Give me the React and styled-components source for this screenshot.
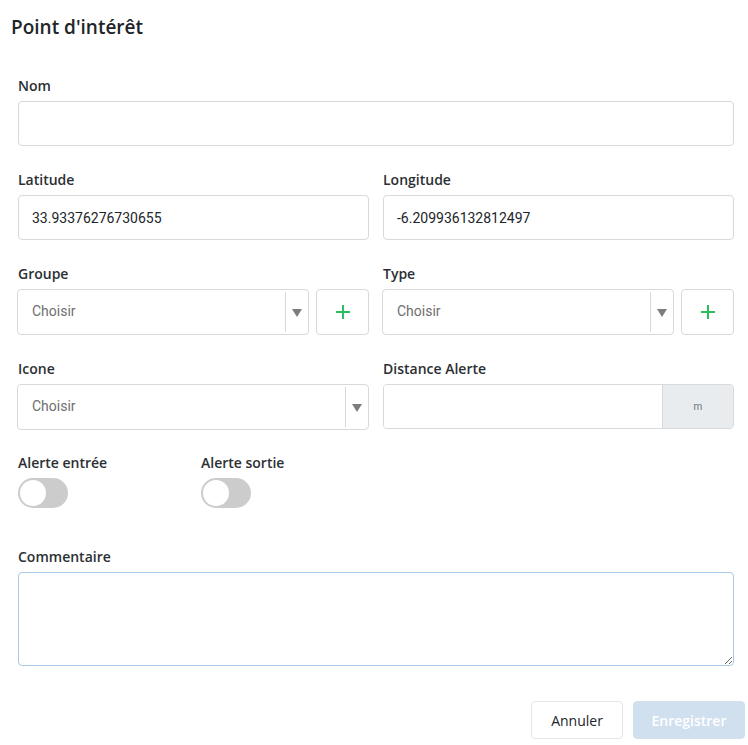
import React from 'react';
import styled, { createGlobalStyle } from 'styled-components';

const GlobalStyle = createGlobalStyle`
  body {
    margin: 0;
    background: #ffffff;
    font-family: 'Open Sans', 'Liberation Sans', sans-serif;
    color: #212529;
  }
`;

const Page = styled.div`
  width: 748px;
  box-sizing: border-box;
`;

const Title = styled.h1`
  margin: 0;
  padding: 15px 11px 0;
  font-size: 19px;
  line-height: 24px;
  font-weight: 600;
  color: #212529;
`;

const Form = styled.form`
  padding: 37px 14px 0 18px;
`;

const Field = styled.div`
  margin-bottom: ${(p) => p.$gap ?? 24}px;
`;

const Label = styled.label`
  display: block;
  font-size: 14px;
  line-height: 20px;
  font-weight: 600;
  margin-bottom: 5px;
  color: #2b2f33;
`;

const Input = styled.input`
  display: block;
  width: 100%;
  height: 45px;
  box-sizing: border-box;
  padding: 0 13px;
  border: 1px solid #d9d9d9;
  border-radius: 4px;
  font-family: Roboto, 'Liberation Sans', sans-serif;
  font-size: 14px;
  color: #212529;
  outline: none;
`;

const Columns = styled.div`
  display: grid;
  grid-template-columns: 1fr 1fr;
  column-gap: 14px;
`;

const SelectRow = styled.div`
  display: flex;
  gap: 7px;
  margin-left: -1px;
`;

const Select = styled.div`
  flex: 1;
  display: flex;
  align-items: center;
  height: 46px;
  box-sizing: border-box;
  border: 1px solid #d9d9d9;
  border-radius: 4px;
  font-family: Roboto, 'Liberation Sans', sans-serif;
  font-size: 14px;
  color: #6f6f6f;
`;

const SelectValue = styled.span`
  flex: 1;
  padding-left: 14px;
  margin-top: -2px;
`;

const Caret = styled.span`
  align-self: stretch;
  display: flex;
  align-items: center;
  justify-content: center;
  width: 22px;
  margin: 2px 0;
  border-left: 1px solid #d9d9d9;

  &::after {
    content: '';
    margin-top: 2px;
    border-left: 5px solid transparent;
    border-right: 5px solid transparent;
    border-top: 8px solid #7d7d7d;
  }
`;

const AddButton = styled.button`
  width: 53px;
  height: 46px;
  display: flex;
  align-items: center;
  justify-content: center;
  padding: 0;
  background: #ffffff;
  border: 1px solid #d9d9d9;
  border-radius: 4px;
`;

const InputGroup = styled.div`
  display: flex;
  height: 45px;
  box-sizing: border-box;
  border: 1px solid #d9d9d9;
  border-radius: 4px;
  overflow: hidden;
`;

const GroupInput = styled.input`
  flex: 1;
  min-width: 0;
  border: none;
  padding: 0 13px;
  outline: none;
  font-family: Roboto, 'Liberation Sans', sans-serif;
  font-size: 14px;
`;

const Addon = styled.span`
  width: 70px;
  display: flex;
  align-items: center;
  justify-content: center;
  background: #e9ecef;
  border-left: 1px solid #d9d9d9;
  font-family: Roboto, 'Liberation Sans', sans-serif;
  font-size: 10px;
  color: #6c757d;
`;

const Toggles = styled.div`
  display: grid;
  grid-template-columns: 183px 183px;
`;

const Switch = styled.span`
  display: block;
  position: relative;
  width: 50px;
  height: 30px;
  border-radius: 15px;
  background: #cccccc;

  &::before {
    content: '';
    position: absolute;
    left: 2px;
    top: 2px;
    width: 26px;
    height: 26px;
    border-radius: 50%;
    background: #ffffff;
  }
`;

const TextArea = styled.textarea`
  display: block;
  width: 100%;
  height: 94px;
  box-sizing: border-box;
  border: 1px solid #a9c9eb;
  border-radius: 4px;
  padding: 8px 13px;
  font-family: Roboto, 'Liberation Sans', sans-serif;
  font-size: 14px;
  outline: none;
`;

const Footer = styled.div`
  display: flex;
  justify-content: flex-end;
  gap: 10px;
  padding: 35px 3px 0 0;
`;

const Button = styled.button`
  width: ${(p) => (p.$primary ? 112 : 92)}px;
  height: 38px;
  padding: 0;
  border-radius: 4px;
  font-family: 'Open Sans', 'Liberation Sans', sans-serif;
  font-size: 14px;
  font-weight: ${(p) => (p.$primary ? 600 : 500)};
  color: ${(p) => (p.$primary ? '#ffffff' : '#212529')};
  background: ${(p) => (p.$primary ? '#d0e0ef' : '#ffffff')};
  border: 1px solid ${(p) => (p.$primary ? '#d0e0ef' : '#e6e6e6')};
`;

const Plus = () => (
  <svg width="16" height="16" viewBox="0 0 16 16">
    <path d="M8 1v14M1 8h14" stroke="#2ebd5c" strokeWidth="2" fill="none" />
  </svg>
);

const Chooser = ({ add }) => (
  <SelectRow>
    <Select>
      <SelectValue>Choisir</SelectValue>
      <Caret />
    </Select>
    {add && (
      <AddButton type="button">
        <Plus />
      </AddButton>
    )}
  </SelectRow>
);

export default function App() {
  return (
    <Page>
      <GlobalStyle />
      <Title>Point d'intérêt</Title>
      <Form>
        <Field>
          <Label>Nom</Label>
          <Input />
        </Field>
        <Columns>
          <Field>
            <Label>Latitude</Label>
            <Input defaultValue="33.93376276730655" />
          </Field>
          <Field>
            <Label>Longitude</Label>
            <Input defaultValue="-6.209936132812497" />
          </Field>
          <Field>
            <Label>Groupe</Label>
            <Chooser add />
          </Field>
          <Field>
            <Label>Type</Label>
            <Chooser add />
          </Field>
          <Field $gap={23}>
            <Label>Icone</Label>
            <Chooser />
          </Field>
          <Field $gap={23}>
            <Label>Distance Alerte</Label>
            <InputGroup>
              <GroupInput />
              <Addon>m</Addon>
            </InputGroup>
          </Field>
        </Columns>
        <Field $gap={39}>
          <Toggles>
            <div>
              <Label>Alerte entrée</Label>
              <Switch />
            </div>
            <div>
              <Label>Alerte sortie</Label>
              <Switch />
            </div>
          </Toggles>
        </Field>
        <Field $gap={0}>
          <Label>Commentaire</Label>
          <TextArea />
        </Field>
      </Form>
      <Footer>
        <Button type="button">Annuler</Button>
        <Button type="button" $primary>
          Enregistrer
        </Button>
      </Footer>
    </Page>
  );
}
